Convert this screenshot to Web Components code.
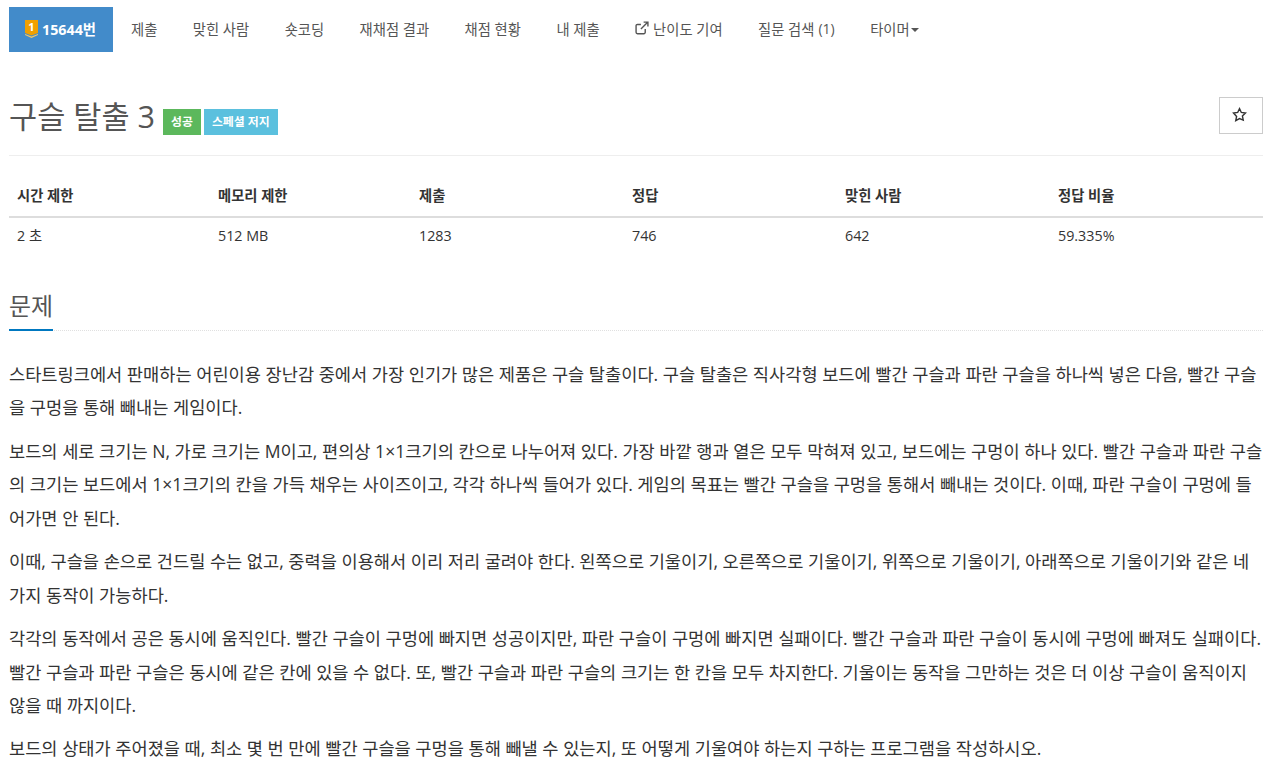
<!DOCTYPE html>
<html lang="ko">
<head>
<meta charset="utf-8">
<title>구슬 탈출 3</title>
<style>
  html, body { margin: 0; padding: 0; background: #fff; }
  body { font-family: "Open Sans", "Noto Sans CJK KR", sans-serif; color: #333; height: 772px; overflow: hidden; }
</style>
</head>
<body>
<problem-nav></problem-nav>
<main-page>
  <problem-title></problem-title>
  <info-table></info-table>
  <section-head>문제</section-head>
  <problem-text>
    <p>스타트링크에서 판매하는 어린이용 장난감 중에서 가장 인기가 많은 제품은 구슬 탈출이다. 구슬 탈출은 직사각형 보드에 빨간 구슬과 파란 구슬을 하나씩 넣은 다음, 빨간 구슬을 구멍을 통해 빼내는 게임이다.</p>
    <p>보드의 세로 크기는 N, 가로 크기는 M이고, 편의상 1×1크기의 칸으로 나누어져 있다. 가장 바깥 행과 열은 모두 막혀져 있고, 보드에는 구멍이 하나 있다. 빨간 구슬과 파란 구슬의 크기는 보드에서 1×1크기의 칸을 가득 채우는 사이즈이고, 각각 하나씩 들어가 있다. 게임의 목표는 빨간 구슬을 구멍을 통해서 빼내는 것이다. 이때, 파란 구슬이 구멍에 들어가면 안 된다.</p>
    <p>이때, 구슬을 손으로 건드릴 수는 없고, 중력을 이용해서 이리 저리 굴려야 한다. 왼쪽으로 기울이기, 오른쪽으로 기울이기, 위쪽으로 기울이기, 아래쪽으로 기울이기와 같은 네 가지 동작이 가능하다.</p>
    <p>각각의 동작에서 공은 동시에 움직인다. 빨간 구슬이 구멍에 빠지면 성공이지만, 파란 구슬이 구멍에 빠지면 실패이다. 빨간 구슬과 파란 구슬이 동시에 구멍에 빠져도 실패이다. 빨간 구슬과 파란 구슬은 동시에 같은 칸에 있을 수 없다. 또, 빨간 구슬과 파란 구슬의 크기는 한 칸을 모두 차지한다. 기울이는 동작을 그만하는 것은 더 이상 구슬이 움직이지 않을 때 까지이다.</p>
    <p>보드의 상태가 주어졌을 때, 최소 몇 번 만에 빨간 구슬을 구멍을 통해 빼낼 수 있는지, 또 어떻게 기울여야 하는지 구하는 프로그램을 작성하시오.</p>
  </problem-text>
</main-page>
<script>
class ProblemNav extends HTMLElement {
  constructor() {
    super();
    this.attachShadow({mode: "open"}).innerHTML = `
    <style>
      :host { display: flex; padding: 7px 9px 0; height: 45px; font-size: 14.3px; color: #555; }
      .brand { display: flex; align-items: center; gap: 4px; width: 104px; box-sizing: border-box; padding: 0 0 2px 16px; background: #428bca; color: #fff; font-weight: 700; }
      a { display: flex; align-items: center; margin: 0 17.75px 0 17.75px; padding-bottom: 3px; white-space: nowrap; }
      a:first-of-type { margin-left: 18px; }
      .sm { font-size: 14px; margin-left: 4px; }
      .caret { width: 0; height: 0; border: 4.500px solid transparent; border-top-color: #555; border-bottom: 0; margin-left: 1px; margin-top: 3px; }
      svg { flex: none; }
    </style>
    <div class="brand">
      <svg width="13" height="18" viewBox="0 0 13 18"><path d="M0 0h13v13l-6.500 2.500L0 13z" fill="#f0a000"/><path d="M0 14l6.500 2.500L13 14v1l-6.500 3L0 15z" fill="#f8c860"/><text x="6.500" y="11" font-size="11" font-weight="700" text-anchor="middle" fill="#fff" font-family="Open Sans">1</text></svg>
      <span>15644번</span>
    </div>
    <a>제출</a><a>맞힌 사람</a><a>숏코딩</a><a>재채점 결과</a><a>채점 현황</a><a>내 제출</a>
    <a><svg width="14" height="14" viewBox="0 0 13 13" fill="none" stroke="#555" stroke-width="1.300" style="margin-right:4px"><path d="M9.500 7.500v3a1.300 1.300 0 0 1-1.300 1.300H2.300A1.300 1.300 0 0 1 1 10.500V4.500a1.300 1.300 0 0 1 1.300-1.300h3.200"/><path d="M5.500 7.500L11.500 1.500M8 1h4v4"/></svg>난이도 기여</a>
    <a>질문 검색<span class="sm">(1)</span></a>
    <a>타이머<span class="caret"></span></a>`;
  }
}
customElements.define("problem-nav", ProblemNav);

class MainPage extends HTMLElement {
  constructor() {
    super();
    this.attachShadow({mode: "open"}).innerHTML = `
    <style>:host { display: block; padding: 0 18px 0 9px; }</style><slot></slot>`;
  }
}
customElements.define("main-page", MainPage);

class ProblemTitle extends HTMLElement {
  constructor() {
    super();
    this.attachShadow({mode: "open"}).innerHTML = `
    <style>
      :host { display: flex; align-items: flex-start; height: 104px; box-sizing: border-box; padding-top: 44px; border-bottom: 1px solid #eee; }
      h1 { margin: 0; font-size: 30.600px; font-weight: 400; line-height: 40px; color: #555; }
      .label { margin-top: 13px; height: 26px; padding: 0 8px; line-height: 24px; font-size: 11.900px; font-weight: 700; color: #fff; }
      .ok { background: #5cb85c; margin-left: 8px; margin-right: 3px; }
      .sj { background: #5bc0de; }
      button { margin-left: auto; width: 44px; height: 37px; margin-top: 1px; border: 1px solid #ccc; background: #fff; padding: 0 4px 2px 0; display: flex; align-items: center; justify-content: center; }
    </style>
    <h1>구슬 탈출 3</h1><span class="label ok">성공</span><span class="label sj">스페셜 저지</span>
    <button aria-label="즐겨찾기"><svg width="15" height="15" viewBox="0 0 14 14" fill="none" stroke="#333" stroke-width="1.300"><path d="M7 1.500l1.700 3.600 3.900.5-2.900 2.700.8 3.900L7 10.800l-3.500 1.900.8-3.900L1.400 5.600l3.900-.5z"/></svg></button>`;
  }
}
customElements.define("problem-title", ProblemTitle);

class InfoTable extends HTMLElement {
  constructor() {
    super();
    const heads = ["시간 제한", "메모리 제한", "제출", "정답", "맞힌 사람", "정답 비율"];
    const vals = ["2 초", "512 MB", "1283", "746", "642", "59.335%"];
    this.attachShadow({mode: "open"}).innerHTML = `
    <style>
      :host { display: grid; grid-template-columns: 201px 201px 213px 213px 213px 213px; margin-top: 20px; font-size: 14.300px; }
      div { padding: 0 8px; }
      .h { height: 40px; line-height: 40px; font-weight: 700; border-bottom: 2px solid #ddd; }
      .v { height: 36px; line-height: 36px; }
    </style>
    ${heads.map(h => `<div class="h">${h}</div>`).join("")}
    ${vals.map(v => `<div class="v">${v}</div>`).join("")}`;
  }
}
customElements.define("info-table", InfoTable);

class SectionHead extends HTMLElement {
  constructor() {
    super();
    this.attachShadow({mode: "open"}).innerHTML = `
    <style>
      :host { display: block; margin-top: 35px; border-bottom: 1px dotted #e0e0e0; }
      .t { display: inline-block; font-size: 24px; line-height: 34px; padding-bottom: 6px; color: #555; border-bottom: 2px solid #0078c0; margin-bottom: -1px; vertical-align: bottom; }
    </style>
    <span class="t"><slot></slot></span>`;
  }
}
customElements.define("section-head", SectionHead);

class ProblemText extends HTMLElement {
  constructor() {
    super();
    this.attachShadow({mode: "open"}).innerHTML = `
    <style>
      :host { display: block; margin-top: 27px; font-size: 17.600px; line-height: 33.440px; }
      ::slotted(p) { margin: 0 0 10px; }
    </style>
    <slot></slot>`;
  }
}
customElements.define("problem-text", ProblemText);
</script>
</body>
</html>
